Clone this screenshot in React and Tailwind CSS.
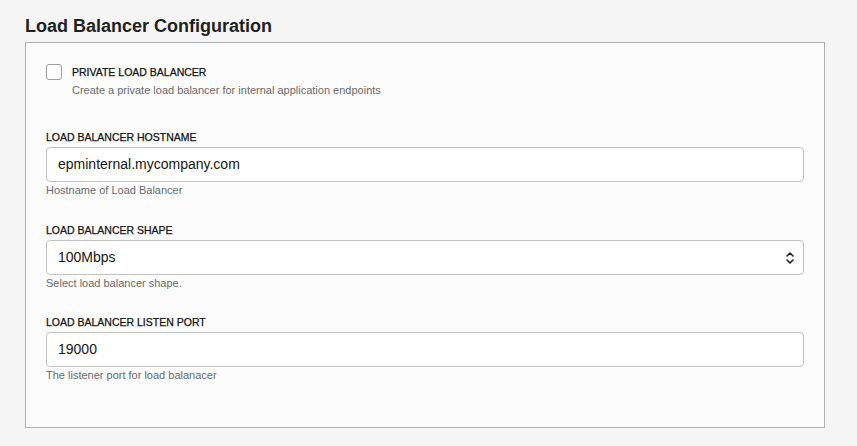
import React from "react";

function Field({ label, help, children, className = "" }) {
  return (
    <div className={className}>
      <div className="text-[10.5px] leading-[12px] text-[#111111] [-webkit-text-stroke:0.25px_#111111]">{label}</div>
      <div className="mt-[4px]">{children}</div>
      <div className="mt-[2px] text-[11px] leading-[13px] text-[#6b6b6b]">{help}</div>
    </div>
  );
}

export default function App() {
  return (
    <div className="w-[857px] h-[446px] bg-[#f5f5f5] pl-[25px] pt-[14px] font-['Liberation_Sans',Arial,sans-serif] text-[#161513]">
      <h2 className="text-[18px] leading-[24px] font-bold text-[#1f1f1f]">Load Balancer Configuration</h2>
      <div className="mt-[4px] w-[800px] h-[386px] border border-[#b3b3b3] bg-[#fcfcfc] px-[20px] pt-[21px]">
        <div className="flex items-start gap-[10px]">
          <div className="w-[16px] h-[16px] rounded-[3px] border border-[#9b9b9b] bg-white" />
          <div className="pt-[1px]">
            <div className="text-[10.5px] leading-[14px] text-[#111111] [-webkit-text-stroke:0.25px_#111111]">PRIVATE LOAD BALANCER</div>
            <div className="mt-[4px] text-[11px] leading-[14px] text-[#6b6b6b]">Create a private load balancer for internal application endpoints</div>
          </div>
        </div>
        <Field className="mt-[34px]" label="LOAD BALANCER HOSTNAME" help="Hostname of Load Balancer">
          <div className="h-[35px] rounded-[4px] border border-[#c2c2c2] bg-white flex items-center px-[11px] text-[14px] text-[#161513]">epminternal.mycompany.com</div>
        </Field>
        <Field className="mt-[27px]" label="LOAD BALANCER SHAPE" help="Select load balancer shape.">
          <div className="h-[35px] rounded-[4px] border border-[#c2c2c2] bg-white flex items-center justify-between pl-[11px] pr-[9px] text-[14px] text-[#161513]">
            <span>100Mbps</span>
            <svg width="8" height="14" viewBox="0 0 8 14" fill="none" stroke="#222" strokeWidth="1.6" strokeLinecap="round" strokeLinejoin="round">
              <path d="M1 5 L4 2 L7 5" />
              <path d="M1 9 L4 12 L7 9" />
            </svg>
          </div>
        </Field>
        <Field className="mt-[26px]" label="LOAD BALANCER LISTEN PORT" help="The listener port for load balanacer">
          <div className="h-[35px] rounded-[4px] border border-[#c2c2c2] bg-white flex items-center px-[11px] text-[14px] text-[#161513]">19000</div>
        </Field>
      </div>
    </div>
  );
}
